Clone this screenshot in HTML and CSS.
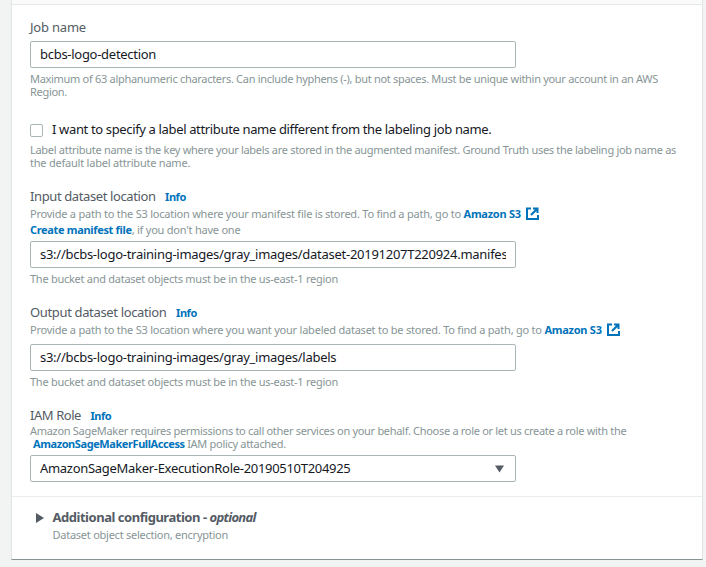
FILE: index.html
```
<!DOCTYPE html>
<html lang="en">
<head>
<meta charset="utf-8">
<title>Job details</title>
<link rel="stylesheet" href="styles.css">
</head>
<body>
<main class="panel">
  <div class="panel-header"></div>
  <form class="panel-body">
    <section class="field">
      <div class="label"><span class="t-job">Job name</span></div>
      <div class="input gap-6"><span class="t-job-value">bcbs-logo-detection</span></div>
      <div class="help gap-4 t-max">Maximum of 63 alphanumeric characters. Can include hyphens (-), but not spaces. Must be unique within your account in an AWS<br>Region.</div>
    </section>

    <section class="field field-check">
      <div class="check-row"><span class="checkbox"></span><span class="t-check">I want to specify a label attribute name different from the labeling job name.</span></div>
      <div class="help gap-6 t-attr">Label attribute name is the key where your labels are stored in the augmented manifest. Ground Truth uses the labeling job name as<br><span class="t-attr-end">the default label attribute name.</span></div>
    </section>

    <section class="field">
      <div class="label"><span class="t-input">Input dataset location</span><a class="info">Info</a></div>
      <div class="help gap-3 t-path"><span>Provide a path to the S3 location where your manifest file is stored. To find a path, go to </span><a class="t-amazon">Amazon S3</a><svg class="external" viewBox="0 0 13 13"><path d="M5 1.5H1v10.5h11V8M7 1.5h4.5V6M11 2 5 8"/></svg></div>
      <div class="help gap-3 t-path"><a class="t-create">Create manifest file</a>, if you don't have one</div>
      <div class="input gap-5"><span class="t-s3">s3://bcbs-logo-training-images/gray_images/dataset-20191207T220924.manifest</span></div>
      <div class="help gap-4 t-bucket">The bucket and dataset objects must be in the us-east-1 region</div>
    </section>

    <section class="field">
      <div class="label"><span class="t-output">Output dataset location</span><a class="info">Info</a></div>
      <div class="help gap-3 t-path"><span>Provide a path to the S3 location where you want your labeled dataset to be stored. To find a path, go to </span><a class="t-amazon">Amazon S3</a><svg class="external" viewBox="0 0 13 13"><path d="M5 1.5H1v10.5h11V8M7 1.5h4.5V6M11 2 5 8"/></svg></div>
      <div class="input gap-8"><span class="t-s3">s3://bcbs-logo-training-images/gray_images/labels</span></div>
      <div class="help gap-4 t-bucket">The bucket and dataset objects must be in the us-east-1 region</div>
    </section>

    <section class="field">
      <div class="label"><span class="t-iam">IAM Role</span><a class="info">Info</a></div>
      <div class="help gap-1 t-max">Amazon SageMaker requires permissions to call other services on your behalf. Choose a role or let us create a role with the<br><a class="policy">AmazonSageMakerFullAccess</a> IAM policy attached.</div>
      <div class="input select gap-5"><span class="t-role">AmazonSageMaker-ExecutionRole-20190510T204925</span><svg class="caret" viewBox="0 0 10 8"><path d="M0 0h10L5 8z"/></svg></div>
    </section>
  </form>
  <footer class="additional">
    <svg class="arrow" viewBox="0 0 8 10"><path d="M0 0v10l8-5z"/></svg>
    <div>
      <div class="additional-title">Additional configuration - <em>optional</em></div>
      <div class="help gap-3 t-dataset">Dataset object selection, encryption</div>
    </div>
  </footer>
</main>
</body>
</html>
```
FILE: styles.css
```
* { box-sizing: border-box; }
body {
  margin: 0;
  height: 567px;
  overflow: hidden;
  background: #f2f3f3;
  color: #16191f;
  font: 13px/16px "Noto Sans", "Open Sans", sans-serif;
  white-space: nowrap;
}
.panel {
  width: 692px;
  height: 560px;
  margin-left: 11px;
  background: #fff;
  border: 1px solid #e0e4e4;
  border-top: 0;
  border-bottom-color: #879596;
}
.panel-header {
  height: 5px;
  background: #fafafa;
  border-bottom: 1px solid #e3e8e8;
}
.panel-body {
  height: 492px;
  padding: 14px 18px 0;
  border-bottom: 1px solid #eaeded;
}
.field + .field { margin-top: 19px; }
.field + .field-check { margin-top: 23px; }
.label {
  display: flex;
  height: 16px;
  color: #545b64;
}
a { color: #0073bb; font-weight: 700; }
.info {
  margin-left: 9.5px;
  font-size: 11px;
  line-height: 17px;
  letter-spacing: -0.45px;
}
.help {
  font-size: 11px;
  line-height: 13px;
  color: #879596;
}
.gap-1 { margin-top: 1px; }
.gap-3 { margin-top: 3px; }
.gap-4 { margin-top: 4px; }
.gap-5 { margin-top: 5px; }
.gap-6 { margin-top: 6px; }
.gap-8 { margin-top: 8px; }
.input {
  display: flex;
  align-items: center;
  width: 486px;
  height: 27px;
  padding: 0 9px;
  border: 1px solid #aab7b8;
  border-radius: 2px;
}
.input span { flex: 1; overflow: hidden; line-height: 25px; }
.caret { width: 9px; height: 8px; margin-right: 2.5px; fill: #545b64; }
.check-row { display: flex; align-items: flex-start; height: 16px; }
.checkbox {
  width: 13px;
  height: 13px;
  margin: 3px 9px 0 0;
  border: 1px solid #aab7b8;
  border-radius: 2px;
}
.external {
  width: 13px;
  height: 13px;
  margin-left: 5px;
  vertical-align: top;
  fill: none;
  stroke: #0073bb;
  stroke-width: 2;
}
.policy { margin-left: 3px; letter-spacing: -0.42px; }
.additional { display: flex; padding: 12px 0 0 24px; }
.arrow { width: 8px; height: 10px; margin: 4px 8.5px 0 0; fill: #545b64; }
.additional-title {
  color: #545b64;
  font-weight: 700;
  letter-spacing: -0.47px;
}
.additional-title em { letter-spacing: -0.66px; }

.t-job { letter-spacing: -0.2px; }
.t-job-value { letter-spacing: -0.28px; }
.t-max { letter-spacing: -0.303px; }
.t-check { letter-spacing: -0.353px; }
.t-attr { letter-spacing: -0.295px; }
.t-attr-end { letter-spacing: -0.22px; }
.t-input { letter-spacing: -0.39px; }
.t-path { letter-spacing: -0.225px; }
.t-amazon { letter-spacing: -0.26px; }
.t-create { letter-spacing: -0.33px; }
.t-s3 { letter-spacing: -0.27px; }
.t-bucket { letter-spacing: -0.265px; }
.t-output { letter-spacing: -0.35px; }
.t-iam { letter-spacing: -0.44px; }
.t-role { letter-spacing: -0.3px; }
.t-dataset { letter-spacing: -0.25px; }
```
